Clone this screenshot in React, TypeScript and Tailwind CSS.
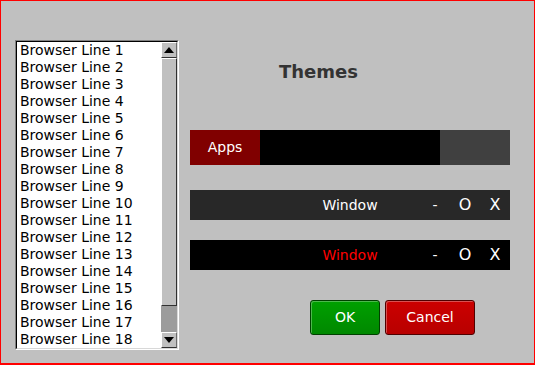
const lines = Array.from({ length: 20 }, (_, i) => `Browser Line ${i + 1}`);

const WindowBar = ({ dark, titleColor }: { dark: string; titleColor: string }) => (
  <div className={`flex h-[30px] w-[320px] items-center text-[14px] ${dark}`}>
    <div className="w-[90px]" />
    <div className={`w-[140px] text-center ${titleColor}`}>Window</div>
    <div className="w-[30px] text-center text-white">-</div>
    <div className="w-[30px] text-center text-[16px] text-white">O</div>
    <div className="w-[30px] text-center text-[16px] text-white">X</div>
  </div>
);

const Arrow = ({ up }: { up?: boolean }) => (
  <div className="flex h-[16px] w-[16px] items-center justify-center border border-t-white border-l-white border-r-[#6b6b6b] border-b-[#303030] bg-[#c0c0c0]">
    <svg width="10" height="6" viewBox="0 0 10 6">
      <path d={up ? 'M0 6 L5 0 L10 6 Z' : 'M0 0 L5 6 L10 0 Z'} fill="#000" />
    </svg>
  </div>
);

export default function App() {
  return (
    <div
      className="flex h-[365px] w-[535px] border border-b-2 border-[#ff0000] bg-[#c0c0c0] pl-[14px] pt-[39px]"
      style={{ fontFamily: '"DejaVu Sans", sans-serif' }}
    >
      {/* browser list */}
      <div className="h-[310px] w-[164px] border border-t-[#808080] border-l-[#808080] border-r-white border-b-white">
        <div className="flex h-full border border-t-black border-l-black border-r-[#d8d8d8] border-b-[#d8d8d8] bg-white">
          <div className="flex-1 overflow-hidden pl-[3px] text-[14px] leading-[17px] text-black">
            {lines.slice(0, 18).map((l) => (
              <div key={l} className="h-[17px] whitespace-nowrap">
                {l}
              </div>
            ))}
          </div>
          <div className="flex w-[16px] flex-col">
            <Arrow up />
            <div className="h-[248px] border border-t-white border-l-white border-r-[#303030] border-b-[#303030] bg-[#c0c0c0]" />
            <div className="flex-1 bg-[#9c9c9c]" />
            <Arrow />
          </div>
        </div>
      </div>

      {/* themes panel */}
      <div className="ml-[11px] flex w-[320px] flex-col">
        <div className="mt-[20px] h-[24px] pl-[89px] text-[18px] font-bold leading-[24px] text-[#333333]">
          Themes
        </div>

        <div className="mt-[46px] flex h-[35px] text-[14px]">
          <div className="flex w-[70px] items-center justify-center bg-[#800000] text-white">Apps</div>
          <div className="w-[180px] bg-black" />
          <div className="w-[70px] bg-[#404040]" />
        </div>

        <div className="mt-[25px]">
          <WindowBar dark="bg-[#282828]" titleColor="text-white" />
        </div>
        <div className="mt-[20px]">
          <WindowBar dark="bg-black" titleColor="text-[#ff0000]" />
        </div>

        <div className="mt-[30px] flex gap-[5px] pl-[120px] text-[14px] text-white">
          <button className="h-[35px] w-[70px] rounded-[3px] border border-[#004000] bg-gradient-to-b from-[#00a000] to-[#008800] shadow-[inset_1px_1px_0_#4cb84c]">
            OK
          </button>
          <button className="h-[35px] w-[90px] rounded-[3px] border border-[#500000] bg-gradient-to-b from-[#cc0000] to-[#b80000] shadow-[inset_1px_1px_0_#d85050]">
            Cancel
          </button>
        </div>
      </div>
    </div>
  );
}
